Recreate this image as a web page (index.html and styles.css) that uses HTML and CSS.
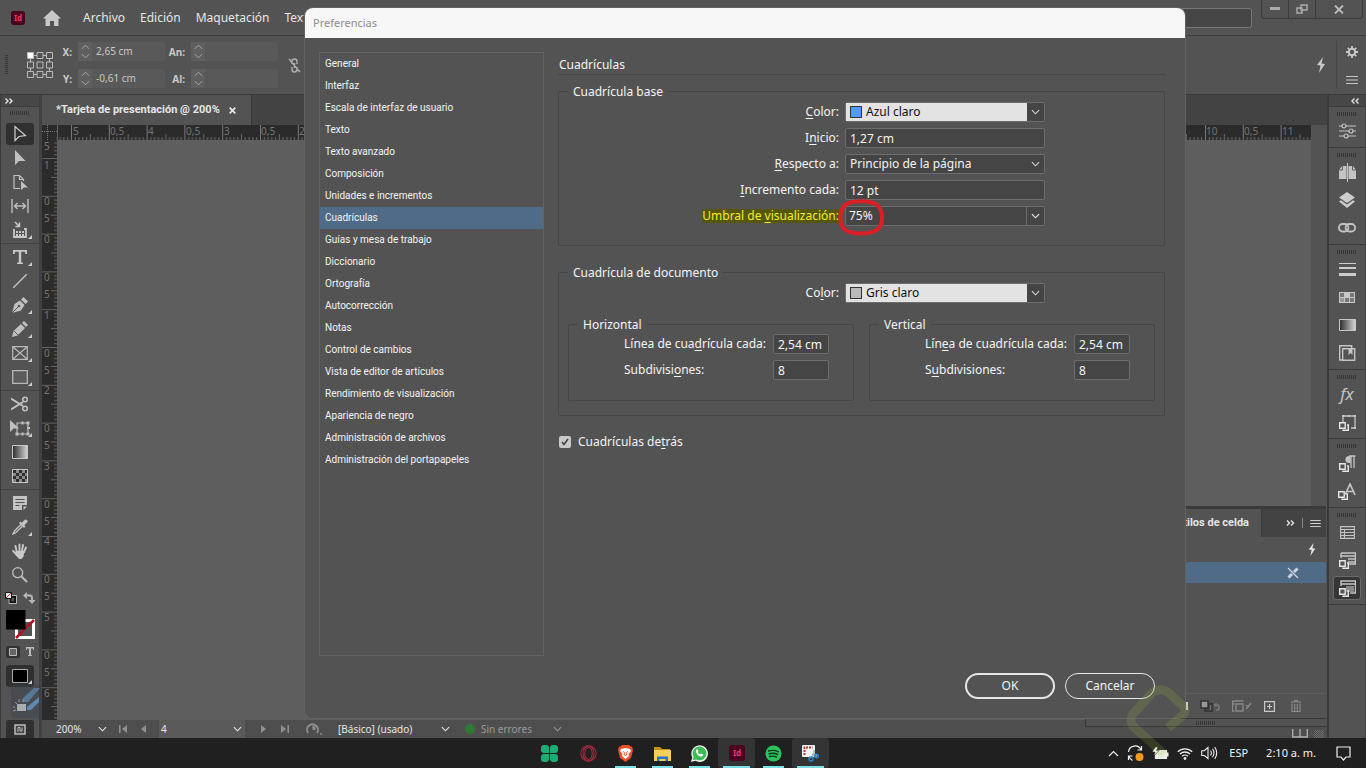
FILE: index.html
```
<!DOCTYPE html>
<html lang="es">
<head>
<meta charset="utf-8">
<title>Preferencias</title>
<link rel="stylesheet" href="styles.css">
</head>
<body>
<svg class="defs" aria-hidden="true">
  <defs>
    <symbol id="chev" viewBox="0 0 10 6"><path d="M1 1l4 4 4-4" fill="none" stroke="currentColor" stroke-width="1.2"/></symbol>
    <symbol id="step" viewBox="0 0 10 16"><path d="M1 5l4-4 4 4M1 11l4 4 4-4" fill="none" stroke="currentColor" stroke-width="1.1"/></symbol>
    <symbol id="bolt" viewBox="0 0 10 16"><path d="M7 0L1 8l3.500 .5L3 16l6-9-3.500-.5z" fill="currentColor"/></symbol>
    <symbol id="lines" viewBox="0 0 12 8"><path d="M0 .5h12M0 4h12M0 7.500h12" stroke="currentColor" fill="none"/></symbol>
    <symbol id="dbl" viewBox="0 0 8 6"><path d="M.5.5L3 3 .5 5.500M4.500.5L7 3 4.500 5.500" fill="none" stroke="currentColor" stroke-width="1.400"/></symbol>
    <symbol id="badge" viewBox="0 0 10 10"><path d="M.7 1.700h5.500v5.500H.7zM8 4h1.300v5.300H4V8.500" fill="#535353" stroke="currentColor" stroke-width="1.400"/></symbol>
    <linearGradient id="grad"><stop offset="0" stop-color="#2c2c2c"/><stop offset="1" stop-color="#d8d8d8"/></linearGradient>
    <pattern id="ticksH" x="29" width="37.800" height="15" patternUnits="userSpaceOnUse">
      <path d="M.5 0v15" stroke="#777"/>
      <path d="M4.300 12v3M8 12v3M11.800 12v3M15.600 12v3M23 12v3M26.900 12v3M30.700 12v3M34.500 12v3M19.300 9v6" stroke="#6b6b6b"/>
    </pattern>
    <pattern id="ticksV" y="18" width="15" height="37.800" patternUnits="userSpaceOnUse">
      <path d="M0 .5h15" stroke="#606060"/>
      <path d="M12 4.300h3M12 8h3M12 11.800h3M12 15.600h3M12 23h3M12 26.900h3M12 30.700h3M12 34.500h3M9 19.300h6" stroke="#666"/>
    </pattern>
  </defs>
</svg>

<header class="menubar">
  <svg class="app-logo" width="14" height="14" viewBox="0 0 14 14" role="img" aria-label="InDesign"><rect width="14" height="14" rx="3" fill="#49021f"/><text x="7" y="10" text-anchor="middle" class="logo-text">Id</text></svg>
  <button class="bare home" aria-label="Inicio"><svg width="18" height="16" viewBox="0 0 18 16"><path d="M9 0L0 8.500h2.500V16H7v-5h4v5h4.500V8.500H18z" fill="#c8c8c8"/></svg></button>
  <nav class="menu"><a href="#">Archivo</a><a href="#">Edición</a><a href="#">Maquetación</a><a href="#">Texto</a></nav>
  <input class="search" type="search" aria-label="Buscar">
  <div class="win-buttons">
    <button aria-label="Minimizar"><svg width="10" height="4"><path d="M0 0h10v3H0z" fill="#aaa"/></svg></button>
    <button aria-label="Restaurar"><svg width="12" height="10" viewBox="0 0 12 10"><path d="M5 1h6v5H5zM1 4h5v5H1z" fill="#535353" stroke="#aaa" stroke-width="1.500"/></svg></button>
    <button class="close" aria-label="Cerrar"><svg width="10" height="9" viewBox="0 0 10 9"><path d="M1 .5l8 8M9 .5l-8 8" stroke="#bbb" stroke-width="1.800"/></svg></button>
  </div>
</header>

<section class="controlbar">
  <span class="grip-v"></span>
  <svg class="refpoint" width="26" height="26" viewBox="0 0 26 26" fill="none" stroke="#bbb"><path d="M3.500 3.500h19v19h-19z"/><g fill="#535353"><path d="M.5.5h6v6h-6z" fill="#fff"/><path d="M10 .5h6v6h-6zM19.500.5h6v6h-6zM.5 10h6v6h-6zM10 10h6v6h-6zM19.500 10h6v6h-6zM.5 19.500h6v6h-6zM10 19.500h6v6h-6zM19.500 19.500h6v6h-6z"/></g></svg>
  <div class="coords">
    <label for="cx">X:</label><span class="num"><button aria-label="Ajustar X"><svg width="9" height="15"><use href="#step"/></svg></button><input id="cx" value="2,65 cm"></span>
    <label for="cw">An:</label><span class="num"><button aria-label="Ajustar ancho"><svg width="9" height="15"><use href="#step"/></svg></button><input id="cw"></span>
    <label for="cy">Y:</label><span class="num"><button aria-label="Ajustar Y"><svg width="9" height="15"><use href="#step"/></svg></button><input id="cy" value="-0,61 cm"></span>
    <label for="ch">Al:</label><span class="num"><button aria-label="Ajustar alto"><svg width="9" height="15"><use href="#step"/></svg></button><input id="ch"></span>
  </div>
  <svg class="chain" width="13" height="15" viewBox="0 0 13 15" fill="none" stroke="#b0b0b0" stroke-width="1.400"><path d="M4 6V3.500a2.500 2.500 0 015 0V6M4 9v2.500a2.500 2.500 0 005 0V9M6.500 5v5M1 1l11 13"/></svg>
  <button class="bare bolt" aria-label="Acciones rápidas"><svg width="10" height="16"><use href="#bolt"/></svg></button>
  <div class="cb-right">
    <button class="bare" aria-label="Configuración"><svg width="12" height="12" viewBox="0 0 12 12"><circle cx="6" cy="6" r="3.200" fill="none" stroke="#c8c8c8" stroke-width="2"/><path d="M6 0v2M6 10v2M0 6h2M10 6h2M1.800 1.800l1.300 1.300M8.900 8.900l1.300 1.300M10.200 1.800L8.900 3.100M3.100 8.900l-1.300 1.300" stroke="#c8c8c8" stroke-width="1.800"/></svg></button>
    <button class="bare" aria-label="Menú"><svg width="12" height="8"><use href="#lines"/></svg></button>
  </div>
</section>

<main class="workspace">
  <aside class="toolbox">
    <div class="dock-head"><svg width="8" height="6"><use href="#dbl"/></svg></div>
    <span class="grip"></span>
    <button class="tool on" aria-label="Selección"><svg width="18" height="18" viewBox="0 0 18 18"><path d="M4 1.500v14l4-4 6.500-1z" fill="none" stroke="#d0d0d0" stroke-width="1.200"/></svg></button>
    <button class="tool" aria-label="Selección directa"><svg width="18" height="18" viewBox="0 0 18 18"><path d="M4 1v15l4-4h6.500z" fill="#c0c0c0"/></svg></button>
    <button class="tool" aria-label="Página"><svg width="18" height="18" viewBox="0 0 18 18"><path d="M9 15.500H3v-13h5.500l4 4V8M8.500 2.500v4h4" fill="none" stroke="#c0c0c0" stroke-width="1.200"/><path d="M10 8v9l3-2.500h4z" fill="#c0c0c0"/></svg></button>
    <button class="tool" aria-label="Hueco"><svg width="18" height="16" viewBox="0 0 18 16"><path d="M1 1v14M17 1v14M4 8h10M6.500 5L3.500 8l3 3M11.500 5l3 3-3 3" fill="none" stroke="#c0c0c0" stroke-width="1.400"/></svg></button>
    <button class="tool more" aria-label="Recopilador de contenido"><svg width="16" height="18" viewBox="0 0 16 18"><path d="M2 8v8h12V8h-2" fill="none" stroke="#c8c8c8" stroke-width="1.800"/><path d="M3 1l4 4M7.500 1.500v4h-4" stroke="#c8c8c8" stroke-width="1.500" fill="none"/><path d="M4 10h2v2H4zM7 10h2v2H7zM10 10h2v2h-2zM4 13h2v2H4zM7 13h2v2H7zM10 13h2v2h-2z" fill="#c8c8c8"/></svg></button>
    <hr>
    <button class="tool more" aria-label="Texto"><svg width="14" height="14" viewBox="0 0 14 14"><path d="M0 0h14v4h-1.500L12 1.800H8.200v10.400L10 13v1H4v-1l1.800-.8V1.800H2L1.500 4H0z" fill="#c8c8c8"/></svg></button>
    <button class="tool" aria-label="Línea"><svg width="14" height="14"><path d="M0 14L14 0" stroke="#c0c0c0" stroke-width="1.500"/></svg></button>
    <button class="tool more" aria-label="Pluma"><svg width="16" height="16" viewBox="0 0 16 16"><path d="M0 16l2.500-9L8 3.500l4.500 4.500L9 13.500z" fill="#c0c0c0"/><path d="M9 2.500L11.500 0 16 4.500 13.500 7z" fill="#c0c0c0"/><path d="M0 16l6-6" stroke="#535353"/><circle cx="7" cy="9" r="1.300" fill="#535353"/></svg></button>
    <button class="tool more" aria-label="Lápiz"><svg width="16" height="16" viewBox="0 0 16 16"><path d="M0 16l1.500-6 7.500-7 4 4-7.500 7.500zM10 2l2-2 4 4-2 2z" fill="#c0c0c0"/><path d="M2 10l4 4" stroke="#535353"/></svg></button>
    <button class="tool more" aria-label="Marco rectangular"><svg width="16" height="14" viewBox="0 0 16 14"><path d="M.7.7h14.600v12.600H.7zM1 1l14 12M15 1L1 13" fill="none" stroke="#b8b8b8" stroke-width="1.200"/></svg></button>
    <button class="tool more" aria-label="Rectángulo"><svg width="16" height="14" viewBox="0 0 16 14"><path d="M.7.7h14.600v12.600H.7z" fill="#5c5c5c" stroke="#b8b8b8" stroke-width="1.300"/></svg></button>
    <hr>
    <button class="tool" aria-label="Tijeras"><svg width="18" height="16" viewBox="0 0 18 16"><path d="M0 2.500l12 7.500M0 13.500L12 6" stroke="#c0c0c0" stroke-width="2"/><circle cx="14" cy="3.500" r="2.300" fill="none" stroke="#c0c0c0" stroke-width="1.500"/><circle cx="14" cy="12.500" r="2.300" fill="none" stroke="#c0c0c0" stroke-width="1.500"/></svg></button>
    <button class="tool more" aria-label="Transformación libre"><svg width="20" height="16" viewBox="0 0 20 16"><path d="M7 3h11v11H7z" fill="none" stroke="#c0c0c0" stroke-width="1.200"/><path d="M16.500 1.500h3v3h-3zM16.500 12.500h3v3h-3zM5.500 12.500h3v3h-3zM11.500 1.500h2v3h-2zM11.500 12.500h2v3h-2zM17 7h3v2h-3z" fill="#c0c0c0"/><path d="M0 0v12l3.500-3.500H9z" fill="#c0c0c0"/></svg></button>
    <button class="tool" aria-label="Muestra de degradado"><svg width="16" height="14" viewBox="0 0 16 14"><path d="M.5.5h15v13H.5z" fill="url(#grad)" stroke="#c8c8c8"/></svg></button>
    <button class="tool" aria-label="Desvanecer degradado"><svg width="16" height="14" viewBox="0 0 16 14"><path d="M.5.5h15v13H.5z" fill="#8a8a8a" stroke="#c8c8c8"/><path d="M1 1h3v3H1zM7 1h3v3H7zM13 1h2v3h-2zM4 4h3v3H4zM10 4h3v3h-3zM1 7h3v3H1zM7 7h3v3H7zM13 7h2v3h-2zM4 10h3v3H4zM10 10h3v3h-3z" fill="#2e2e2e"/></svg></button>
    <hr>
    <button class="tool" aria-label="Nota"><svg width="14" height="14" viewBox="0 0 14 14"><path d="M0 0h14v9H9v5H0zM14 10.500L10.500 14v-3.500z" fill="#c4c4c4"/><path d="M2.500 3.500h9M2.500 6.500h9M2.500 9.500h4" stroke="#535353"/></svg></button>
    <button class="tool more" aria-label="Cuentagotas"><svg width="16" height="16" viewBox="0 0 16 16"><path d="M9 5.500L2.500 12 1 15l3-1.500L10.500 7" fill="none" stroke="#c4c4c4" stroke-width="1.300"/><path d="M7 4l5 5 1.500-1.500L12.300 6.200 15.500 3A2 2 0 0013 .5L9.800 3.700 8.500 2.500z" fill="#c4c4c4"/></svg></button>
    <button class="tool" aria-label="Mano"><svg width="16" height="16" viewBox="0 0 16 16"><path d="M5 10L3.500 3M7.500 8V1.500M10 8l1-6M12 9l2-4.500M4.500 11.500L1.200 8" stroke="#c8c8c8" stroke-width="1.900" stroke-linecap="round"/><path d="M4 8h8.500l-1 5.500L9.500 16H7L3.500 12z" fill="#c8c8c8"/></svg></button>
    <button class="tool" aria-label="Zoom"><svg width="16" height="16" viewBox="0 0 16 16"><circle cx="5.700" cy="5.700" r="5" fill="none" stroke="#c0c0c0" stroke-width="1.300"/><path d="M9.500 9.500l5.500 5.500" stroke="#c0c0c0" stroke-width="2"/></svg></button>
    <div class="pair"><svg width="12" height="12" viewBox="0 0 12 12"><path d="M5 4.500h5.500v6H5z" fill="none" stroke="#111" stroke-width="2.400"/><path d="M4 3.500h7.500v8H4z" fill="none" stroke="#ddd" stroke-width=".8"/><path d="M.5.5h6v6h-6z" fill="#eee" stroke="#111"/><path d="M1 6l5-5" stroke="#c33"/></svg><svg width="12" height="12" viewBox="0 0 12 12"><path d="M3 3.500h4A2 2 0 019 5.500V8" fill="none" stroke="#b8b8b8" stroke-width="1.800"/><path d="M0 3.500L4 0v7zM9 12L5.500 8h7z" fill="#b8b8b8"/></svg></div>
    <svg class="fills" width="29" height="29" viewBox="0 0 29 29"><path d="M11 10h17v17H11z" fill="#535353"/><path d="M10.500 10.500h17v17h-17z" fill="none" stroke="#fff" stroke-width="3"/><path d="M10 28L28 10" stroke="#b01220" stroke-width="2.500"/><path d="M15 15h8v8h-8z" fill="#535353"/><path d="M14 24l9-9.500" stroke="#b01220" stroke-width="2.500"/><path d="M0 0h19.500v19.500H0z" fill="#000"/></svg>
    <div class="pair format"><svg width="14" height="12" viewBox="0 0 14 12"><rect width="14" height="12" rx="2" fill="#333"/><path d="M3.500 2.500h7v7h-7z" fill="#666" stroke="#bbb"/></svg><svg width="8" height="9" viewBox="0 0 8 9"><path d="M0 0h8v3H7V1.500H5V8l1 .3V9H2v-.7L3 8V1.500H1V3H0z" fill="#bbb"/></svg></div>
    <button class="tool on more" aria-label="Color"><svg width="16" height="14"><path d="M.5.5h15v13H.5z" fill="#000" stroke="#aaa"/></svg></button>
    <button class="tool on screen" aria-label="Modo de pantalla"><svg width="12" height="11" viewBox="0 0 12 11"><path d="M1 1h10v9H1z" fill="#444" stroke="#bbb" stroke-width="1.500"/><path d="M4 8V3.500h2V7h2V3.500" fill="none" stroke="#bbb"/></svg></button>
    <svg class="mark-left" width="32" height="38" viewBox="0 0 32 38" aria-hidden="true"><rect y="2" width="32" height="34" rx="4" fill="#3a4350" opacity=".4"/><path d="M12 16L23 6h6L17 20h-5z" fill="#58789a"/><path d="M16 25l12-10v5l-8 8h-4z" fill="#5f88b0"/><path d="M6 22h9v7H6z" fill="#a8aeb4"/><path d="M2 29l3-1M2 25h2M4 20l2 2M8 17v3M12 17v3" stroke="#999"/></svg>
  </aside>

  <section class="document">
    <div class="tabs"><div class="tab"><span>*Tarjeta de presentación @ 200%</span><button class="bare" aria-label="Cerrar pestaña"><svg width="7" height="7" viewBox="0 0 7 7"><path d="M.7.7l5.600 5.600M6.300.7L.7 6.300" stroke="#e4e4e4" stroke-width="1.800"/></svg></button></div></div>
    <div class="ruler-row">
      <svg class="ruler-h" width="100%" height="15"><rect width="100%" height="15" fill="url(#ticksH)"/><path d="M0 0h14.500v15H0z" fill="#2b2b2b"/><path d="M5.500 0v15M0 6.500h15" stroke="#777" stroke-dasharray="1 1"/><path d="M15.500 0v15" stroke="#666"/>
        <g class="ruler-text"><text x="31" y="10">5</text><text x="68" y="10">0,5</text><text x="106" y="10">4</text><text x="144" y="10">0,5</text><text x="182" y="10">3</text><text x="219" y="10">0,5</text><text x="257" y="10">2</text><text x="1164" y="10">10</text><text x="1202" y="10">0,5</text><text x="1240" y="10">11</text></g></svg>
    </div>
    <div class="canvas-row">
      <svg class="ruler-v" width="15" height="100%"><rect width="15" height="100%" fill="url(#ticksV)"/>
        <g class="ruler-text"><text x="2" y="10">5</text><text x="2" y="29">1</text><text x="2" y="65">0</text><text x="2" y="82">5</text><text x="2" y="103">0</text><text x="2" y="141">0</text><text x="2" y="158">5</text><text x="2" y="179">1</text><text x="2" y="217">0</text><text x="2" y="234">5</text><text x="2" y="254">2</text><text x="2" y="292">0</text><text x="2" y="309">5</text><text x="2" y="330">3</text><text x="2" y="368">0</text><text x="2" y="385">5</text><text x="2" y="405">4</text><text x="2" y="443">0</text><text x="2" y="460">5</text><text x="2" y="481">5</text><text x="2" y="519">0</text><text x="2" y="536">5</text><text x="2" y="557">6</text></g></svg>
      <div class="canvas"></div>
      <div class="scrollbar"></div>
    </div>
    <footer class="status">
      <span class="zoom">200%</span><svg width="9" height="6"><use href="#chev"/></svg>
      <svg class="first" width="8" height="8"><path d="M.8 0v8" stroke="#909090" stroke-width="1.500"/><path d="M8 0v8L3 4z" fill="#909090"/></svg>
      <svg class="prev" width="5" height="8"><path d="M5 0v8L0 4z" fill="#909090"/></svg>
      <span class="page-box"><input aria-label="Página" value="4"><svg width="9" height="6"><use href="#chev"/></svg></span>
      <svg class="next" width="5" height="8"><path d="M0 0v8l5-4z" fill="#909090"/></svg>
      <svg class="last" width="8" height="8"><path d="M7.200 0v8" stroke="#909090" stroke-width="1.500"/><path d="M0 0v8l5-4z" fill="#909090"/></svg>
      <svg class="preflight" width="18" height="14" viewBox="0 0 18 14"><path d="M3 11A5.500 5.500 0 1112 11" fill="none" stroke="#8c8c8c" stroke-width="2"/><path d="M7.500 3v5h3V5" fill="#8c8c8c"/><circle cx="16" cy="12" r="1" fill="#8c8c8c"/></svg>
      <span class="profile">[Básico] (usado)</span><svg width="9" height="6"><use href="#chev"/></svg>
      <span class="dot"></span><span class="noerr">Sin errores</span><svg class="dim" width="9" height="6"><use href="#chev"/></svg>
      <svg class="spread" width="16" height="9" viewBox="0 0 16 9"><path d="M.7 0v8h14.600V0M8 0v8" fill="none" stroke="#b0b0b0" stroke-width="1.300"/></svg>
      <span class="resize"></span>
    </footer>

    <aside class="panel">
      <div class="panel-head"><div class="panel-tab">Estilos de celda</div><svg width="9" height="6"><use href="#dbl"/></svg><i></i><svg width="11" height="7"><use href="#lines"/></svg></div>
      <div class="panel-bolt"><svg width="8" height="13"><use href="#bolt"/></svg></div>
      <div class="panel-row"><svg width="12" height="12" viewBox="0 0 12 12"><path d="M1 1l10 10" stroke="#ccd6e0" stroke-width="1.200"/><path d="M7 5l3.500-3.500M1.500 10.500L5 7" stroke="#ccd6e0" stroke-width="3"/></svg></div>
      <div class="panel-body"></div>
      <div class="panel-foot">
        <svg width="6" height="8"><path d="M0 0h6v8H0z" fill="#c8c8c8"/></svg>
        <svg width="20" height="12" viewBox="0 0 20 12"><path d="M1 1h7v7H1z" fill="#999" stroke="#333" stroke-width="1.500"/><path d="M9 4h3v7H5V9h4z" fill="#777" stroke="#2f2f2f" stroke-width="1.500"/><path d="M15 5h4v5h-3M16.500 3L14.500 5l2 2" fill="none" stroke="#888"/></svg>
        <svg width="20" height="12" viewBox="0 0 20 12"><path d="M.5 1h11M.5 1v10h2M.5 4h2M4 4h7v7H4z" fill="none" stroke="#888" stroke-width="1.400"/><path d="M14 9l5-6M14 5l3 2" stroke="#888" stroke-width="1.500"/></svg>
        <svg width="11" height="11" viewBox="0 0 11 11"><path d="M.6.6h9.800v9.800H.6zM5.500 3v5M3 5.500h5" fill="none" stroke="#c8c8c8" stroke-width="1.200"/></svg>
        <svg class="trash" width="10" height="12" viewBox="0 0 10 12"><path d="M0 2h10M3.500 1.500V.5h3v1M1 3.500v8h8v-8M3.700 4v7M6.300 4v7" fill="none" stroke="#8c8c8c" stroke-width="1.100"/></svg>
      </div>
      <div class="panel-grip"><span class="grip"></span></div>
    </aside>
  </section>

  <aside class="dock">
    <div class="dock-head right"><svg class="flip" width="8" height="6"><use href="#dbl"/></svg></div>
    <div class="group"><span class="grip"></span>
      <button aria-label="Propiedades"><svg width="17" height="16" viewBox="0 0 17 16" fill="#535353" stroke="#c4c4c4" stroke-width="1.200"><path d="M0 3h17M0 8h17M0 13h17"/><circle cx="5" cy="3" r="2"/><circle cx="12" cy="8" r="2"/><circle cx="7" cy="13" r="2"/></svg></button></div>
    <div class="group"><span class="grip"></span>
      <button aria-label="Páginas"><svg width="17" height="19" viewBox="0 0 17 19"><path d="M0 7l3-4h4.500v13H0zM9.500 3H14l3 4v9H9.500z" fill="#c4c4c4"/><path d="M0 7h3.500V3M17 7h-3.500V3" fill="none" stroke="#535353" stroke-width=".9"/><path d="M8.500 0v19" stroke="#c4c4c4"/></svg></button>
      <button aria-label="Capas"><svg width="16" height="16" viewBox="0 0 16 16"><path d="M8 0l8 5.500L8 11 0 5.500z" fill="#ccc"/><path d="M0 9.500l2-1.300 6 4.300 6-4.300 2 1.300L8 16z" fill="#ccc"/></svg></button>
      <button aria-label="Vínculos"><svg width="18" height="10" viewBox="0 0 18 10"><rect x=".9" y="1" width="9.500" height="7.500" rx="3.700" fill="none" stroke="#c4c4c4" stroke-width="1.800"/><rect x="7.600" y="1" width="9.500" height="7.500" rx="3.700" fill="none" stroke="#c4c4c4" stroke-width="1.800"/></svg></button></div>
    <div class="group"><span class="grip"></span>
      <button aria-label="Trazo"><svg width="17" height="13" viewBox="0 0 17 13"><path d="M0 0h17v1H0zM0 4h17v2H0zM0 10h17v3H0z" fill="#ccc"/></svg></button>
      <button aria-label="Muestras"><svg width="16" height="11" viewBox="0 0 16 11"><path d="M0 0h16v11H0z" fill="#c8c8c8"/><path d="M1 1h4v4H1zM11 1h4v4h-4zM6 6h4v4H6zM11 6h4v4h-4z" fill="#777"/><path d="M1 6h4v4H1z" fill="#999"/></svg></button>
      <button aria-label="Degradado"><svg width="17" height="12" viewBox="0 0 17 12"><path d="M.5.5h16v11H.5z" fill="url(#grad)" stroke="#c8c8c8"/></svg></button>
      <button aria-label="Bibliotecas"><svg width="17" height="16" viewBox="0 0 17 16"><path d="M3 15H.7V.7h12V3M3.700 3.700h12v11.500h-12z" fill="none" stroke="#c4c4c4" stroke-width="1.400"/><path d="M9.500 3h4v7l-2-2-2 2z" fill="#c4c4c4"/></svg></button></div>
    <div class="group"><span class="grip"></span>
      <button class="fx" aria-label="Efectos">fx</button>
      <button aria-label="Estilos de objeto"><svg width="17" height="17" viewBox="0 0 17 17"><path d="M4 8V2h12v12h-4" fill="none" stroke="#c4c4c4" stroke-width="1.300"/><path d="M3 1h2.500v2H3zM14.500 1H17v2h-2.500zM14.500 13H17v2h-2.500zM9 1h2v2H9z" fill="#c4c4c4"/><use href="#badge" y="7" width="10" height="10"/></svg></button></div>
    <div class="group"><span class="grip"></span>
      <button aria-label="Estilos de párrafo"><svg width="17" height="17" viewBox="0 0 17 17"><path d="M16.500 1H10M15 1v12M12 1v12" fill="none" stroke="#c4c4c4" stroke-width="1.300"/><path d="M11.500 1H10a3.500 3.500 0 000 7h1.500z" fill="#c4c4c4"/><use href="#badge" y="7" width="10" height="10"/></svg></button>
      <button aria-label="Estilos de carácter"><svg width="18" height="17" viewBox="0 0 18 17"><path d="M7 12l5-11 5 11M8.500 8.500h7" fill="none" stroke="#c4c4c4" stroke-width="1.700"/><use href="#badge" y="7" width="10" height="10"/></svg></button></div>
    <div class="group"><span class="grip"></span>
      <button aria-label="Tabla"><svg width="15" height="13" viewBox="0 0 15 13"><path d="M.6.6h13.800v11.800H.6zM.6 3.500h13.800M.6 6.500h13.800M.6 9.500h13.800M4.500 3.500v9" fill="none" stroke="#c4c4c4" stroke-width="1.100"/></svg></button>
      <button aria-label="Estilos de tabla"><svg width="17" height="17" viewBox="0 0 17 17"><path d="M2 1h14.500v11H8M2 1v5M2 4h14.500M9 7h7M9 10h7" fill="none" stroke="#c4c4c4" stroke-width="1.400"/><use href="#badge" y="7" width="10" height="10"/></svg></button>
      <button class="on" aria-label="Estilos de celda"><svg width="17" height="17" viewBox="0 0 17 17"><path d="M2 6V1h14.500v12H11M2 4h14.500" fill="none" stroke="#c4c4c4" stroke-width="1.400"/><path d="M7 6h8v6H7z" fill="#8a8a8a"/><use href="#badge" y="7" width="10" height="10"/></svg></button></div>
  </aside>
</main>

<footer class="taskbar">
  <div class="apps">
    <button class="first-app" aria-label="Trébol"><svg width="17" height="17" viewBox="0 0 17 17" fill="#1dac75"><rect width="8" height="8" rx="3"/><rect x="9" width="8" height="8" rx="3"/><rect y="9" width="8" height="8" rx="3"/><rect x="9" y="9" width="8" height="8" rx="3"/><path d="M5 5h3v3H5zM9 5h3v3H9zM5 9h3v3H5zM9 9h3v3H9z"/></svg></button>
    <button aria-label="Opera"><svg width="17" height="17" viewBox="0 0 17 17" fill="none" stroke="#a52a40" stroke-width="1.100"><circle cx="8.500" cy="8.500" r="7.700"/><ellipse cx="8.500" cy="8.500" rx="3.700" ry="6"/><ellipse cx="8.500" cy="8.500" rx="5.500" ry="7.500"/></svg></button>
    <button class="run" aria-label="Brave"><svg width="15" height="17" viewBox="0 0 15 17"><path d="M4 0h7l1.500 1.500H14L15 5l-2 8-5.500 4L2 13 0 5l1-3.500h1.500z" fill="#e8502a"/><path d="M3 4l4.500-1L12 4l1 2-2.500 3 .5 2-3.500 3L4 11l.5-2L2 6z" fill="#fff"/><path d="M5 6.500l1.500 1-.5 2 1.500 1 1.500-1-.5-2 1.500-1" fill="none" stroke="#e8502a"/></svg></button>
    <button class="run" aria-label="Explorador"><svg width="17" height="15" viewBox="0 0 17 15"><path d="M0 1h6l2 2h8v5H0z" fill="#c89218"/><path d="M0 4h17v11H0z" fill="#f7cf59"/><path d="M3 15v-4.500h11V15h-2.500v-2h-6v2z" fill="#2378c4"/></svg></button>
    <button class="run" aria-label="WhatsApp"><svg width="17" height="17" viewBox="0 0 17 17"><path d="M0 17l1.300-4.500A8.300 8.300 0 114.500 15.800z" fill="#f1f6f2"/><path d="M1.700 15.300l1-3.200a6.900 6.900 0 112.400 2.300z" fill="#3dbb56"/><path d="M5 5.200q1.200-1.800 2 .1l.4 1-.7 1q1 1.700 2.500 2.300l1-1.200 2 1q.2 1.600-1.800 2.200C7.500 11.500 4.500 8 5 5.200z" fill="#fff"/></svg></button>
    <button class="run wide" aria-label="InDesign"><svg width="16" height="16" viewBox="0 0 16 16"><rect width="16" height="16" rx="3" fill="#4b0420"/><text x="8" y="11" text-anchor="middle" class="logo-text">Id</text></svg></button>
    <button class="run" aria-label="Spotify"><svg width="17" height="17" viewBox="0 0 17 17"><circle cx="8.500" cy="8.500" r="8" fill="#2ac55c"/><path d="M3.500 6q5-1.500 10 .8M4 8.800q4.500-1.300 8.500.7M4.500 11.500q4-1 7 .6" fill="none" stroke="#16331f" stroke-width="1.400" stroke-linecap="round"/></svg></button>
    <button class="run wide" aria-label="Recortes"><svg width="17" height="17" viewBox="0 0 17 17"><rect width="13" height="12" rx="1" fill="#f4f4f4"/><path d="M2.500 10V2.500h8" fill="none" stroke="#b33" stroke-width="2" stroke-dasharray="2 1"/><path d="M12 5v5l-4 3M10 9l5 2" stroke="#9bb" stroke-width="1.500" fill="none"/><circle cx="9" cy="14" r="2" fill="none" stroke="#2b86c9" stroke-width="1.400"/><circle cx="14.500" cy="11" r="1.800" fill="none" stroke="#2b86c9" stroke-width="1.400"/></svg></button>
  </div>
  <div class="tray">
    <svg width="11" height="7" viewBox="0 0 11 7"><path d="M1 6l4.500-4.500L10 6" fill="none" stroke="#eee" stroke-width="1.200"/></svg>
    <svg width="17" height="17" viewBox="0 0 17 17"><path d="M1.500 7A6.500 6.500 0 0114 5M14.500 1v4h-4M5.500 15.500A6.500 6.500 0 012 11M1.500 15v-4h4" fill="none" stroke="#eee" stroke-width="1.200"/><circle cx="12.500" cy="12" r="4" fill="#f59a1f"/></svg>
    <svg width="17" height="13" viewBox="0 0 17 13"><path d="M3.500 3.500h11v8h-11z" fill="#e8eee0" stroke="#eee" stroke-width="1.200"/><path d="M15 5.500h1.500v4H15z" fill="#eee"/><path d="M3.500 0L0 5h3l-1 4 5-5.500H4.500L6 0z" fill="#fff" stroke="#202020" stroke-width=".6"/></svg>
    <svg width="16" height="13" viewBox="0 0 16 13"><path d="M.8 4.800a10.200 10.200 0 0114.400 0M3 7a7.200 7.200 0 0110 0M5.200 9.200a4 4 0 015.600 0" fill="none" stroke="#eee" stroke-width="1.300"/><circle cx="8" cy="11.500" r="1.400" fill="#eee"/></svg>
    <svg width="17" height="14" viewBox="0 0 17 14"><path d="M.7 4.700h2.600L7 1.500v11L3.300 9.500H.7zM9.500 4.500q1.700 2.500 0 5M11.500 2.800q3 4.200 0 8.400M13.700 1q4 6 0 12" fill="none" stroke="#eee" stroke-width="1.100"/></svg>
    <span class="lang">ESP</span><time>2:10 a. m.</time>
    <svg width="15" height="15" viewBox="0 0 15 15"><path d="M1 1h13v10H10l-2.500 3L5 11H1z" fill="none" stroke="#eee" stroke-width="1.200"/></svg>
  </div>
</footer>

<div class="dialog" role="dialog" aria-labelledby="dlg-title">
  <h1 id="dlg-title">Preferencias</h1>
  <div class="dialog-main">
    <nav class="sections">
      <a href="#">General</a><a href="#">Interfaz</a><a href="#">Escala de interfaz de usuario</a><a href="#">Texto</a><a href="#">Texto avanzado</a><a href="#">Composición</a><a href="#">Unidades e incrementos</a><a href="#" class="current" aria-current="true">Cuadrículas</a><a href="#">Guías y mesa de trabajo</a><a href="#">Diccionario</a><a href="#">Ortografía</a><a href="#">Autocorrección</a><a href="#">Notas</a><a href="#">Control de cambios</a><a href="#">Vista de editor de artículos</a><a href="#">Rendimiento de visualización</a><a href="#">Apariencia de negro</a><a href="#">Administración de archivos</a><a href="#">Administración del portapapeles</a>
    </nav>
    <form class="settings">
      <h2>Cuadrículas</h2>
      <fieldset class="base">
        <legend>Cuadrícula base</legend>
        <div class="rows">
          <label for="c1"><u>C</u>olor:</label>
          <span class="combo light"><i class="swatch blue"></i><select id="c1"><option>Azul claro</option></select><svg width="9" height="6"><use href="#chev"/></svg></span>
          <label for="ini">I<u>n</u>icio:</label><input id="ini" value="1,27 cm">
          <label for="resp"><u>R</u>especto a:</label>
          <span class="combo"><select id="resp"><option>Principio de la página</option></select><svg width="9" height="6"><use href="#chev"/></svg></span>
          <label for="inc"><u>I</u>ncremento cada:</label><input id="inc" value="12 pt">
          <label for="umb"><mark>Umbral de <u>v</u>isualización:</mark></label>
          <span class="combo split"><input id="umb" value="75%"><button type="button" aria-label="Elegir umbral"><svg width="9" height="6"><use href="#chev"/></svg></button><svg class="ring" width="48" height="38" viewBox="0 0 48 38"><path d="M7 7C14 2 32 2 39 7c6 5 7 18 1 24-7 6-27 6-34 0C1 25 1 13 7 7z" fill="none" stroke="#dc1f26" stroke-width="4"/></svg></span>
        </div>
      </fieldset>
      <fieldset class="docgrid">
        <legend>Cuadrícula de documento</legend>
        <div class="rows">
          <label for="c2">Co<u>l</u>or:</label>
          <span class="combo light"><i class="swatch gray"></i><select id="c2"><option>Gris claro</option></select><svg width="9" height="6"><use href="#chev"/></svg></span>
        </div>
        <div class="axes">
          <fieldset><legend>Horizontal</legend><div class="axis">
            <label for="h1">Línea de cua<u>d</u>rícula cada:</label><input id="h1" value="2,54 cm">
            <label for="h2">Subdivisi<u>o</u>nes:</label><input id="h2" value="8"></div></fieldset>
          <fieldset><legend>Vertical</legend><div class="axis">
            <label for="v1">Lín<u>e</u>a de cuadrícula cada:</label><input id="v1" value="2,54 cm">
            <label for="v2">S<u>u</u>bdivisiones:</label><input id="v2" value="8"></div></fieldset>
        </div>
      </fieldset>
      <div class="check"><span class="box"><input type="checkbox" id="behind" checked><svg width="8" height="8" viewBox="0 0 8 8"><path d="M1 4l2 2.500L7 1" fill="none" stroke="#444" stroke-width="1.600"/></svg></span><label for="behind">Cuadrículas de<u>t</u>rás</label></div>
    </form>
  </div>
  <div class="actions"><button class="ok">OK</button><button>Cancelar</button></div>
</div>
<svg class="watermark" width="76" height="76" viewBox="0 0 76 76" aria-hidden="true"><path d="M44 44L59 31q4-5 0-9L44 8q-8-5-16 1L9 30q-4 6 0 12l31 28" fill="none" stroke="#a3c23e" stroke-width="9" opacity=".18"/></svg>
</body>
</html>
```
FILE: styles.css
```
* { box-sizing: border-box; }
html, body { height: 100%; }
body {
  margin: 0;
  display: grid;
  grid-template-rows: 36px 59px minmax(0, 1fr) 30px;
  position: relative;
  overflow: hidden;
  background: #535353;
  color: #e6e6e6;
  font: 12px/16px "Noto Sans", "Open Sans", sans-serif;
}
a { color: inherit; text-decoration: none; }
svg { display: block; flex: none; }
button, input, select { font: inherit; color: inherit; margin: 0; padding: 0; border: 0; background: none; border-radius: 0; }
button { display: flex; align-items: center; justify-content: center; }
u { text-underline-offset: 2px; }
.defs { position: absolute; width: 0; height: 0; }
.logo-text { font: bold 8px "Noto Sans", sans-serif; fill: #f0326e; }

/* Menu bar */
.menubar { display: flex; align-items: center; padding-left: 11px; border-bottom: 1px solid #3e3e3e; }
.home { margin-left: 18px; }
.menu { display: flex; gap: 15px; margin-left: 22px; }
.search { width: 260px; height: 20px; margin-left: auto; border: 1px solid #777; border-radius: 3px; background: #454545; }
.win-buttons { display: flex; align-self: flex-start; margin: 0 3px 0 9px; border: 1px solid #3c3c3c; border-top: 0; border-radius: 0 0 4px 4px; }
.win-buttons button { width: 27px; height: 18px; border-right: 1px solid #3c3c3c; }
.win-buttons .close { width: 46px; border-right: 0; }

/* Control bar */
.controlbar { display: flex; align-items: center; padding-left: 5px; border-bottom: 1px solid #3a3a3a; color: #c8c8c8; }
.grip-v { width: 3px; height: 20px; background: repeating-linear-gradient(#363636 0 1px, transparent 1px 2px); }
.refpoint { margin-left: 19px; }
.coords { display: grid; grid-template-columns: 20px 87px 22px 87px; gap: 7px 2px; margin-left: 3px; font-size: 10px; }
.coords label { font-weight: bold; text-align: right; line-height: 20px; padding-right: 4px; }
.num { display: flex; height: 19px; background: #595959; border-radius: 2px; }
.num button { width: 17px; background: #5f5f5f; color: #aaa; }
.num input { width: 100%; min-width: 0; padding-left: 4px; }
.chain { margin-left: 10px; }
.bolt { margin-left: auto; }
.cb-right { display: flex; flex-direction: column; align-items: center; justify-content: space-between; height: 48px; margin-left: 10px; padding: 5px 8px 5px 9px; border-left: 1px solid #484848; }

/* Workspace */
.workspace { display: grid; grid-template-columns: 42px minmax(0, 1fr) 39px; min-height: 0; overflow: hidden; }
.dock-head { display: flex; align-items: center; width: 100%; height: 12px; padding-left: 4px; background: #474747; border-bottom: 1px solid #3a3a3a; }
.dock-head.right { justify-content: flex-end; padding-right: 6px; }
.flip { transform: scaleX(-1); }
.grip { display: block; width: 20px; height: 4px; background: repeating-linear-gradient(90deg, #363636 0 1px, transparent 1px 2px); }

.toolbox { position: relative; display: flex; flex-direction: column; align-items: center; border-left: 1px solid #3a3a3a; border-right: 3px solid #414141; }
.toolbox .grip { margin: 4px 0 7px; }
.toolbox hr { width: 100%; height: 1px; margin: 1px 0; border: 0; background: #444; flex: none; }
.tool { position: relative; width: 28px; height: 24px; flex: none; }
.tool.on { height: 22px; margin: 1px 0; border-radius: 3px; background: #303030; }
.tool.more::after { content: ""; position: absolute; right: 2px; bottom: 3px; border: 2px solid transparent; border-right-color: #ccc; border-bottom-color: #ccc; }
.pair { display: flex; gap: 6px; align-items: center; height: 22px; }
.fills { margin-top: 1px; }
.pair.format { height: 25px; }
.tool.screen { height: 18px; margin-top: auto; border-radius: 3px 3px 0 0; margin-bottom: 0; }
.mark-left { position: absolute; left: 10px; bottom: 18px; }

.document { position: relative; display: flex; flex-direction: column; min-width: 0; }
.tabs { display: flex; height: 30px; background: #434343; }
.tab { display: flex; align-items: center; gap: 9px; padding: 0 15px 0 14px; background: #535353; border-right: 1px solid #383838; font: bold 11px/16px Roboto, "Noto Sans", sans-serif; }
.ruler-row { height: 15px; padding-right: 16px; background: #535353; }
.ruler-h, .ruler-v { background: #2b2b2b; }
.ruler-text { fill: #747474; font: 10px "Noto Sans", sans-serif; }
.canvas-row { display: flex; flex: 1; min-height: 0; }
.canvas { flex: 1; background: #5e5e5e; }
.scrollbar { width: 16px; background: #535353; }
.status { display: flex; align-items: center; height: 18px; padding-left: 14px; background: #4e4e4e; font-size: 10px; }
.status .zoom { width: 42px; }
.first { margin-left: 12px; }
.prev { margin-left: 14px; }
.page-box { display: flex; align-items: center; width: 86px; height: 18px; margin-left: 13px; padding-right: 3px; background: #5a5a5a; }
.page-box input { flex: 1; min-width: 0; padding-left: 2px; }
.next { margin-left: 16px; }
.last { margin-left: 15px; }
.preflight { margin-left: 16px; }
.profile { width: 103px; margin-left: 15px; }
.dot { width: 10px; height: 10px; margin-left: 15px; border-radius: 50%; background: #2f7a33; }
.noerr { width: 72px; margin-left: 6px; color: #9a9a9a; }
.dim { color: #999; }
.spread { margin-left: auto; align-self: flex-end; }
.resize { width: 10px; height: 8px; margin: 0 3px 0 6px; align-self: flex-end; background: repeating-conic-gradient(#6c6c6c 0 25%, transparent 0 50%) 0 0 / 2px 2px; }

/* Floating styles panel */
.panel { position: absolute; right: 1px; bottom: 11px; width: 241px; display: flex; flex-direction: column; background: #535353; border-top: 3px solid #3a3a3a; }
.panel-head { display: flex; align-items: center; gap: 7px; height: 28px; padding-right: 5px; background: #434343; }
.panel-tab { flex: 0 0 177px; margin-right: auto; padding-right: 12px; background: #535353; border-right: 1px solid #3a3a3a; font: bold 11px/28px Roboto, "Noto Sans", sans-serif; text-align: right; }
.panel-head i { width: 1px; height: 10px; background: #888; }
.panel-bolt { display: flex; justify-content: flex-end; align-items: center; height: 25px; padding-right: 10px; }
.panel-row { display: flex; justify-content: flex-end; align-items: center; height: 21px; padding-right: 27px; background: #4f6b87; }
.panel-body { height: 111px; border-bottom: 1px solid #5e5e5e; }
.panel-foot { display: flex; align-items: center; justify-content: flex-end; gap: 12px; height: 25px; padding-right: 25px; border-bottom: 1px solid #383838; }
.trash { margin-left: 4px; }
.panel-grip { display: flex; justify-content: center; align-items: center; height: 8px; border: solid #383838; border-width: 0 0 1px 1px; }

.dock { border-left: 2px solid #3a3a3a; border-right: 1px solid #444; }
.group { display: flex; flex-direction: column; align-items: center; padding-top: 5px; padding-bottom: 2px; border-bottom: 1px solid #3a3a3a; }
.group .grip { margin-bottom: 1px; }
.group button { width: 28px; height: 28px; }
.group .on { height: 24px; margin: 2px 0; background: #363636; border: 1px solid #6a6a6a; border-radius: 3px; }
.group .fx { color: #c4c4c4; font: italic 17px/20px "Noto Sans", sans-serif; }

/* Taskbar */
.taskbar { position: relative; display: flex; align-items: center; background: #202020; }
.apps { display: flex; height: 100%; margin-left: 529px; }
.apps button { width: 37px; height: 30px; position: relative; }
.apps .first-app { width: 41px; }
.run::after { content: ""; position: absolute; left: 8px; right: 8px; bottom: 0; height: 2px; background: #7de0e6; }
.apps .wide { background: #343434; border-radius: 3px; }
.wide::after { left: 5px; right: 5px; }
.tray { display: flex; align-items: center; gap: 8px; margin-left: auto; padding-right: 15px; color: #f4f4f4; font-size: 12px; }
.lang { margin-left: 3px; font-size: 11px; }
.tray time { margin: 0 12px 0 10px; font-size: 11px; }

/* Preferences dialog */
.dialog { position: absolute; left: 305px; top: 8px; bottom: 50px; width: 880px; display: flex; flex-direction: column; background: #535353; border-radius: 8px; box-shadow: 0 0 0 1px #626262; color: #f4f4f4; }
.dialog h1 { margin: 0; padding-left: 8px; height: 30px; background: #f7f7f7; color: #8d8d8d; border-radius: 8px 8px 0 0; font: 11px/30px "Noto Sans", sans-serif; }
.dialog-main { flex: 1; display: grid; grid-template-columns: 225px minmax(0, 1fr); gap: 14px; padding: 14px 20px 0 14px; min-height: 0; }
.sections { border: 1px solid #636363; font: 10px/22px Roboto, "Noto Sans", sans-serif; }
.sections a { display: block; padding-left: 5px; }
.sections .current { background: #4f6b87; }
.settings h2 { margin: 0 0 8px; height: 23px; padding-left: 1px; border-bottom: 1px solid #474747; font-size: 12px; font-weight: normal; line-height: 25px; }
fieldset { margin: 0; min-width: 0; padding: 0; border: 1px solid #464646; border-radius: 2px; }
legend { margin-left: 9px; padding: 0 5px; line-height: 17px; }
.rows { display: grid; grid-template-columns: 280px 200px; grid-auto-rows: 20px; gap: 6px; line-height: 20px; }
.rows label { text-align: right; }
.rows > input, .combo, .axis input { height: 20px; border: 1px solid #6d6d6d; border-radius: 2px; background: #454545; padding-left: 4px; line-height: 18px; min-width: 0; width: 100%; }
.base { height: 163px; padding-top: 2px; }
.docgrid { height: 152px; margin-top: 18px; padding-top: 2px; }
.combo { position: relative; display: flex; align-items: center; padding-right: 4px; }
.combo select { flex: 1; height: 18px; appearance: none; outline: 0; }
.combo > svg { color: #d8d8d8; }
.rows .light { padding-left: 0; gap: 4px; }
.light select { padding-left: 20px; background: #e3e3e3; color: #111; }
.swatch { position: absolute; left: 4px; top: 3px; width: 12px; height: 12px; border: 1px solid #333; }
.blue { background: #4f99ff; }
.gray { background: #bababa; }
.rows .split { padding: 0 0 0 3px; }
.split input { flex: 1; min-width: 0; height: 18px; line-height: 18px; }
.split button { width: 18px; height: 18px; border-left: 1px solid #6d6d6d; }
.ring { position: absolute; left: -8px; top: -9px; }
mark { background: linear-gradient(#57560f, #57560f) 0 60% / 100% 14px no-repeat; color: #f2ee2c; }
.axes { display: grid; grid-template-columns: 1fr 1fr; gap: 15px; margin: 13px 9px 0; }
.axes fieldset { height: 85px; padding-top: 1px; }
.axis { display: grid; grid-template-columns: 143px 56px; grid-auto-rows: 20px; gap: 6px; margin-left: 55px; line-height: 20px; white-space: nowrap; }
.check { display: flex; align-items: center; gap: 7px; margin-top: 18px; padding-left: 1px; }
.box { position: relative; display: grid; place-items: center; width: 12px; height: 12px; }
.box > * { grid-area: 1 / 1; }
.box input { appearance: none; width: 12px; height: 12px; border-radius: 2px; background: #c8c8c8; }
.box svg { position: relative; pointer-events: none; }
.actions { display: flex; justify-content: flex-end; gap: 10px; padding: 17px 30px 19px; }
.actions button { width: 90px; height: 26px; border: 1px solid #e6e6e6; border-radius: 13px; }
.actions .ok { border-width: 2px; }
.watermark { position: absolute; right: 166px; bottom: 8px; pointer-events: none; }
```
